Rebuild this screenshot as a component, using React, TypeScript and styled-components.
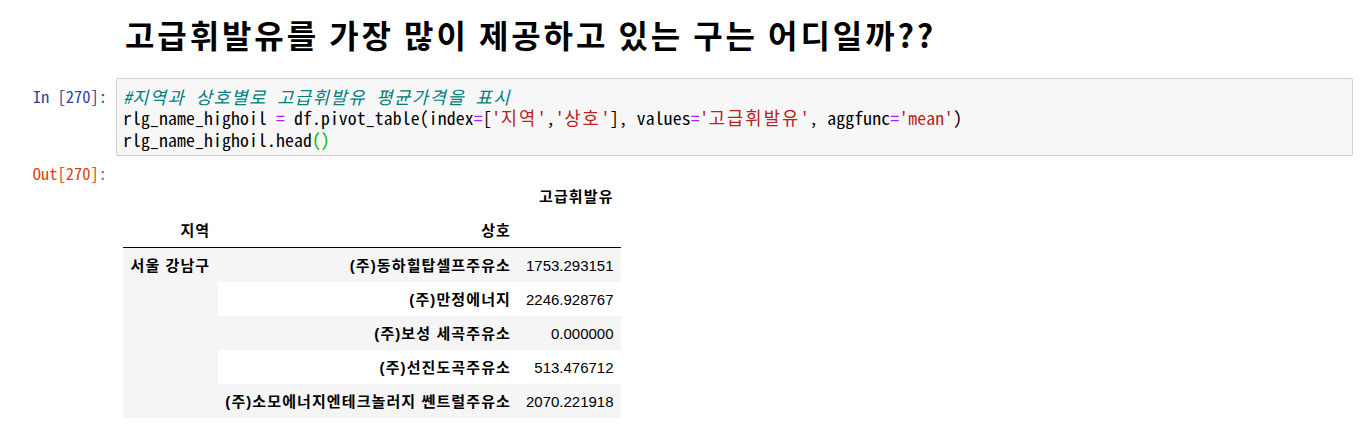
import styled, { createGlobalStyle } from 'styled-components'

const GlobalStyle = createGlobalStyle`
  html, body {
    margin: 0;
    padding: 0;
    background: #fff;
  }
  body {
    font-family: "Liberation Sans", "Noto Sans CJK KR", sans-serif;
    color: #000;
  }
`

const Notebook = styled.div`
  padding: 0 8px 0 0;
`

const Cell = styled.div`
  display: flex;
  align-items: flex-start;
`

const Prompt = styled.div<{ $kind: 'in' | 'out' | 'none' }>`
  flex: 0 0 116px;
  box-sizing: border-box;
  padding-right: 9px;
  text-align: right;
  font-family: "Noto Sans Mono CJK KR", "DejaVu Sans Mono", monospace;
  font-size: 16.5px;
  line-height: 21px;
  color: ${(p) => (p.$kind === 'in' ? '#303F9F' : '#D84315')};
`

const Markdown = styled.div`
  flex: 1;
  padding: 12px 0 0 9px;
  height: 64px;
  box-sizing: border-box;
`

const Title = styled.h1`
  margin: 0;
  font-family: "Noto Sans CJK KR", "Liberation Sans", sans-serif;
  font-weight: 700;
  font-size: 32px;
  line-height: 44px;
  letter-spacing: 2.9px;
`

const InputRow = styled(Cell)`
  margin-top: 14px;
  > ${Prompt} {
    padding-top: 8px;
  }
`

const CodeBox = styled.div`
  flex: 1;
  height: 78px;
  box-sizing: border-box;
  background: #f7f7f7;
  border: 1px solid #cfcfcf;
  border-radius: 2px;
  padding: 7px 6px;
`

const CodeLine = styled.div`
  font-family: "Noto Sans Mono CJK KR", "DejaVu Sans Mono", monospace;
  font-size: 17.7px;
  line-height: 21.3px;
  letter-spacing: 0.15px;
  white-space: pre;
  color: #000;
`

const Tok = styled.span<{ $t: 'comment' | 'op' | 'str' | 'match' }>`
  color: ${(p) =>
    ({ comment: '#008080', op: '#AA22FF', str: '#BA2121', match: '#00bb00' })[p.$t]};
  font-style: ${(p) => (p.$t === 'comment' ? 'italic' : 'normal')};
`

// Hangul in the code font sets a little wider than the mono cells
const Ko = styled.span<{ $spread?: number }>`
  letter-spacing: ${(p) => p.$spread ?? 2}px;
`

const OutputRow = styled(Cell)`
  margin-top: 7px;
  > ${Prompt} {
    padding-top: 0;
  }
`

const OutputArea = styled.div`
  flex: 1;
  padding: 16px 0 0 7px;
`

const Frame = styled.table`
  border-collapse: collapse;
  border-spacing: 0;
  font-size: 15px;
  font-family: "Liberation Sans", "Noto Sans CJK KR", sans-serif;

  th, td {
    text-align: right;
    vertical-align: middle;
    padding: 7.5px 7.5px;
    line-height: 19px;
    white-space: nowrap;
  }
  th {
    font-weight: 700;
    letter-spacing: 1.1px;
  }
  thead {
    border-bottom: 1px solid #000;
  }
  tbody tr:nth-child(odd) {
    background: #f5f5f5;
  }
  tbody th[rowspan] {
    vertical-align: top;
    background: #f5f5f5;
  }
`

const rows: [string, string][] = [
  ['(주)동하힐탑셀프주유소', '1753.293151'],
  ['(주)만정에너지', '2246.928767'],
  ['(주)보성 세곡주유소', '0.000000'],
  ['(주)선진도곡주유소', '513.476712'],
  ['(주)소모에너지엔테크놀러지 쎈트럴주유소', '2070.221918'],
]

const App: React.FC = () => {
  return (
    <Notebook>
      <GlobalStyle />
      <Cell>
        <Prompt $kind="none" />
        <Markdown>
          <Title>고급휘발유를 가장 많이 제공하고 있는 구는 어디일까??</Title>
        </Markdown>
      </Cell>

      <InputRow>
        <Prompt $kind="in">In [270]:</Prompt>
        <CodeBox>
          <CodeLine>
            <Tok $t="comment">
              #<Ko $spread={1.5}>지역과 상호별로 고급휘발유 평균가격을 표시</Ko>
            </Tok>
          </CodeLine>
          <CodeLine>
            {'rlg_name_highoil '}
            <Tok $t="op">=</Tok>
            {' df.pivot_table(index'}
            <Tok $t="op">=</Tok>[
            <Tok $t="str">
              '<Ko>지역</Ko>'
            </Tok>
            ,
            <Tok $t="str">
              '<Ko>상호</Ko>'
            </Tok>
            {'], values'}
            <Tok $t="op">=</Tok>
            <Tok $t="str">
              '<Ko>고급휘발유</Ko>'
            </Tok>
            {', aggfunc'}
            <Tok $t="op">=</Tok>
            <Tok $t="str">'mean'</Tok>)
          </CodeLine>
          <CodeLine>
            rlg_name_highoil.head<Tok $t="match">()</Tok>
          </CodeLine>
        </CodeBox>
      </InputRow>

      <OutputRow>
        <Prompt $kind="out">Out[270]:</Prompt>
        <OutputArea>
          <Frame>
            <thead>
              <tr>
                <th />
                <th />
                <th>고급휘발유</th>
              </tr>
              <tr>
                <th>지역</th>
                <th>상호</th>
                <th />
              </tr>
            </thead>
            <tbody>
              {rows.map(([name, value], i) => (
                <tr key={name}>
                  {i === 0 && <th rowSpan={rows.length}>서울 강남구</th>}
                  <th>{name}</th>
                  <td>{value}</td>
                </tr>
              ))}
            </tbody>
          </Frame>
        </OutputArea>
      </OutputRow>
    </Notebook>
  )
}

export default App
